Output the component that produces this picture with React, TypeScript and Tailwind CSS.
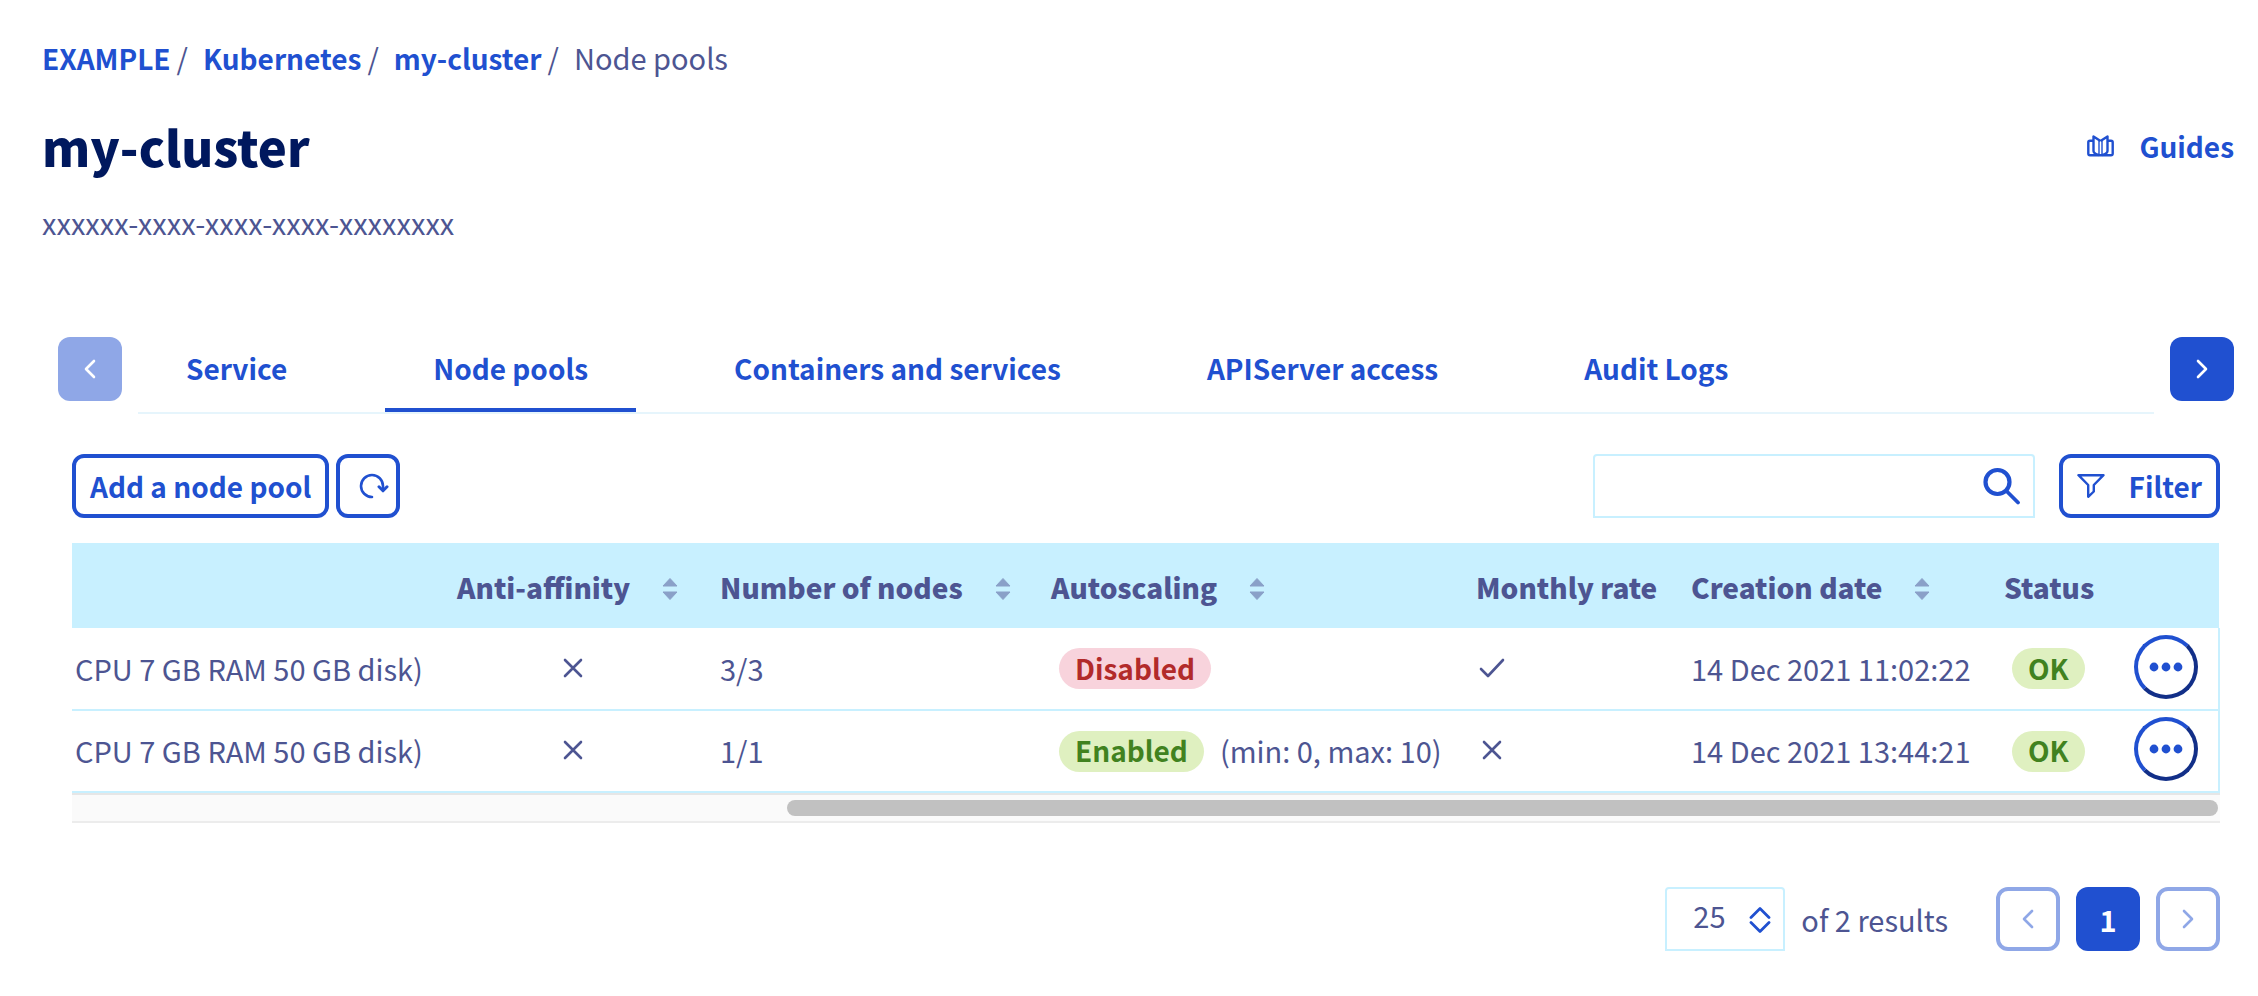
import React from "react";

type IconProps = { className?: string };

const ChevronLeft = ({ className }: IconProps) => (
  <svg viewBox="0 0 12 20" className={className} fill="none" stroke="currentColor" strokeWidth="2.6" strokeLinecap="round" strokeLinejoin="round" aria-hidden="true">
    <path d="M10 2 2 10l8 8" />
  </svg>
);

const ChevronRight = ({ className }: IconProps) => (
  <svg viewBox="0 0 12 20" className={className} fill="none" stroke="currentColor" strokeWidth="2.6" strokeLinecap="round" strokeLinejoin="round" aria-hidden="true">
    <path d="m2 2 8 8-8 8" />
  </svg>
);

const Book = () => (
  <svg viewBox="0 0 28 24" className="h-6 w-7" fill="none" stroke="currentColor" strokeWidth="2.4" strokeLinejoin="round" aria-hidden="true">
    <path d="M6.5 6.700H3Q1.300 6.700 1.300 8.200V19.500Q1.300 21.200 3 21.200H24Q25.700 21.200 25.700 19.500V8.200Q25.700 6.700 24 6.700H20.500" />
    <path d="M13.500 7 6.500 2.500V17Q6.500 19.500 11.700 21M13.500 7 20.500 2.500V17Q20.500 19.500 15.300 21" />
    <path d="M12 6.500V20.500M15 6.500V20.500" strokeWidth="1.400" />
  </svg>
);

const Refresh = () => (
  <svg viewBox="0 0 30 26" className="h-[26px] w-[30px]" fill="none" stroke="currentColor" strokeWidth="2.600" strokeLinecap="round" strokeLinejoin="round" aria-hidden="true">
    <path d="M13 24A11 11 0 1 1 24 13V17.500" />
    <path d="m20 13.800 4 4 4-4" strokeWidth="3" />
  </svg>
);

const Search = () => (
  <svg viewBox="0 0 38 38" className="h-[38px] w-[38px]" fill="none" stroke="currentColor" strokeWidth="4.200" strokeLinecap="round" aria-hidden="true">
    <circle cx="14.500" cy="15" r="12" />
    <path d="m24 24.500 11 11" strokeWidth="3.800" />
  </svg>
);

const Funnel = () => (
  <svg viewBox="0 0 28 26" className="h-[26px] w-7" fill="none" stroke="currentColor" strokeWidth="2.400" strokeLinejoin="round" aria-hidden="true">
    <path d="M1.500 2.200H26.500L16.800 12V18.500L11.200 23.800V12Z" />
  </svg>
);

const Cross = ({ label }: { label: string }) => (
  <svg viewBox="0 0 20 20" className="h-5 w-5" fill="none" stroke="currentColor" strokeWidth="2.600" strokeLinecap="round" role="img" aria-label={label}>
    <path d="m2 2 16 16M18 2 2 18" />
  </svg>
);

const Check = ({ label }: { label: string }) => (
  <svg viewBox="0 0 26 20" className="h-5 w-[26px]" fill="none" stroke="currentColor" strokeWidth="2.600" strokeLinecap="round" strokeLinejoin="round" role="img" aria-label={label}>
    <path d="m2 11 7 7L24 2" />
  </svg>
);

const Sort = () => (
  <svg viewBox="0 0 16 24" className="mt-1 h-6 w-4 text-[#8aa0c8]" fill="currentColor" stroke="currentColor" strokeWidth="1" strokeLinejoin="round" aria-hidden="true">
    <path d="M8 1.500 15 9H1Z" />
    <path d="M8 22.500 15 15H1Z" />
  </svg>
);

const UpDown = ({ className }: IconProps) => (
  <svg viewBox="0 0 22 26" className={className} fill="none" stroke="currentColor" strokeWidth="2.800" strokeLinecap="round" strokeLinejoin="round" aria-hidden="true">
    <path d="m2 10.500 9-9 9 9M2 15.500l9 9 9-9" />
  </svg>
);

const Dots = () => (
  <svg viewBox="0 0 34 10" className="h-[10px] w-[34px]" fill="currentColor" aria-hidden="true">
    <circle cx="5" cy="5" r="4.400" />
    <circle cx="17" cy="5" r="4.400" />
    <circle cx="29" cy="5" r="4.400" />
  </svg>
);

const columns = [
  { label: "", sortable: false, width: "w-[369px]" },
  { label: "Anti-affinity", sortable: true, width: "w-[263px]" },
  { label: "Number of nodes", sortable: true, width: "w-[331px]" },
  { label: "Autoscaling", sortable: true, width: "" },
  { label: "Monthly rate", sortable: false, width: "w-[215px]" },
  { label: "Creation date", sortable: true, width: "w-[313px]" },
  { label: "Status", sortable: false, width: "w-[124px]" },
  { label: "", sortable: false, width: "w-[107px]" },
];

const rows = [
  { flavor: "CPU 7 GB RAM 50 GB disk)", nodes: "3/3", autoscaling: false, range: "", monthly: true, created: "14 Dec 2021 11:02:22", status: "OK" },
  { flavor: "CPU 7 GB RAM 50 GB disk)", nodes: "1/1", autoscaling: true, range: "(min: 0, max: 10)", monthly: false, created: "14 Dec 2021 13:44:21", status: "OK" },
];

const parents = ["EXAMPLE", "Kubernetes", "my-cluster"];
const tabs = ["Service", "Node pools", "Containers and services", "APIServer access", "Audit Logs"];

const outlined = "flex h-16 items-center rounded-xl border-4 border-[#2050d0] text-[28px] font-bold text-[#2050d0]";
const greenPill = "inline-flex h-[41px] items-center rounded-full bg-[#dff0c0] px-4 pb-0.5 text-[28px] font-bold text-[#41821f]";
const redPill = "inline-flex h-[41px] items-center rounded-full bg-[#f8d3dc] px-4 pb-0.5 text-[28px] font-bold text-[#b22a2a]";

export default function App() {
  return (
    <main className="pt-[37px] pr-6 pl-[42px] font-['Noto_Sans_CJK_SC','Noto_Sans_CJK_JP',sans-serif] text-[29px] leading-10 text-[#4d5592]">
      <nav aria-label="Breadcrumb">
        <ol className="flex items-baseline">
          {parents.map((p) => (
            <li key={p} className="mr-[15px] flex items-baseline gap-1.5">
              <a href="#" className="text-[28px] font-bold text-[#2050d0]">{p}</a>
              <span>/</span>
            </li>
          ))}
          <li>Node pools</li>
        </ol>
      </nav>

      <header className="mt-9 flex items-center justify-between">
        <h1 className="text-[49px] leading-[64px] font-black text-[#00185e]">my-cluster</h1>
        <button className="flex items-center gap-6 text-[28px] font-bold text-[#2050d0]">
          <Book />
          Guides
        </button>
      </header>
      <p className="mt-6">xxxxxx-xxxx-xxxx-xxxx-xxxxxxxx</p>

      <section className="mt-[95px] ml-4 flex items-start gap-4">
        <button disabled aria-label="Previous tabs" className="flex size-16 items-center justify-center rounded-xl bg-[#8fa7e7] text-white">
          <ChevronLeft className="h-5 w-3" />
        </button>
        <div role="tablist" className="flex flex-1 gap-[50px] border-b-2 border-[#e6f5fc]">
          {tabs.map((t) => (
            <button
              key={t}
              role="tab"
              aria-selected={t === "Node pools"}
              className={
                t === "Node pools"
                  ? "h-[75px] border-b-4 border-[#2050d0] px-12 pb-2.5 text-[28px] font-bold text-[#2050d0]"
                  : "h-[75px] border-b-4 border-transparent px-12 pb-2.5 text-[28px] font-bold text-[#2050d0]"
              }
            >
              {t}
            </button>
          ))}
        </div>
        <button aria-label="Next tabs" className="flex size-16 items-center justify-center rounded-xl bg-[#2050d0] text-white">
          <ChevronRight className="h-5 w-3" />
        </button>
      </section>

      <section className="mt-10 mr-[14px] ml-[30px]">
        <div className="flex items-center justify-between">
          <div className="flex gap-[7px]">
            <button className={`${outlined} px-3.5`}>Add a node pool</button>
            <button aria-label="Refresh" className={`${outlined} w-16 justify-end pr-[7px]`}>
              <Refresh />
            </button>
          </div>
          <div className="flex gap-6">
            <div className="flex h-16 w-[442px] items-center rounded-t border-2 border-[#c8f0ff] pr-3">
              <input type="search" aria-label="Search node pools" className="h-full min-w-0 flex-1 px-4 outline-none" />
              <button aria-label="Search" className="text-[#2050d0]">
                <Search />
              </button>
            </div>
            <button className={`${outlined} gap-6 px-[14px]`}>
              <Funnel />
              Filter
            </button>
          </div>
        </div>

        <div className="mt-[25px] overflow-hidden">
          <table className="w-full table-fixed border-collapse text-left whitespace-nowrap">
            <thead>
              <tr className="h-[85px] bg-[#c8f0ff]">
                {columns.map((c, i) => (
                  <th key={i} scope="col" className={`${c.width} px-4 pt-0.5 pb-0 text-[28px] font-black`}>
                    {c.sortable ? (
                      <button className="flex items-center gap-8 font-black">
                        {c.label}
                        <Sort />
                      </button>
                    ) : (
                      c.label
                    )}
                  </th>
                ))}
              </tr>
            </thead>
            <tbody className="border-r-2 border-[#c8f0ff]">
              {rows.map((r) => (
                <tr key={r.created} className="h-[82px] border-b-2 border-[#c8f0ff]">
                  <td className="pt-0 pb-0.5 pl-[3px]">{r.flavor}</td>
                  <td className="px-4 pt-0 pb-0.5">
                    <div className="flex justify-center">
                      <Cross label="Disabled" />
                    </div>
                  </td>
                  <td className="px-4 pt-0 pb-0.5">{r.nodes}</td>
                  <td className="py-0 pl-6">
                    <div className="flex items-center gap-4">
                      <span className={r.autoscaling ? greenPill : redPill}>{r.autoscaling ? "Enabled" : "Disabled"}</span>
                      {r.range && <span className="pb-0.5">{r.range}</span>}
                    </div>
                  </td>
                  <td className="px-4 pt-0 pb-0.5">
                    <div className="flex w-8 justify-center">{r.monthly ? <Check label="Yes" /> : <Cross label="No" />}</div>
                  </td>
                  <td className="px-4 pt-0 pb-0.5">{r.created}</td>
                  <td className="py-0 pl-6">
                    <div className="flex">
                      <span className={greenPill}>{r.status}</span>
                    </div>
                  </td>
                  <td className="pt-0 pr-5 pb-1">
                    <div className="flex justify-end">
                      <button
                        aria-label="Actions"
                        className="flex size-16 items-center justify-center rounded-full border-4 border-t-[#2050d0] border-r-[#122f88] border-b-[#122f88] border-l-[#2050d0] text-[#2050d0]"
                      >
                        <Dots />
                      </button>
                    </div>
                  </td>
                </tr>
              ))}
            </tbody>
          </table>
          <div className="flex h-[30px] items-center justify-end border-y-2 border-t-[#e6e6e6] border-b-[#ececec] bg-[#fafafa] pr-[2px]">
            <div className="h-4 w-2/3 rounded-full bg-[#c1c1c1]" />
          </div>
        </div>

        <div className="mt-16 flex items-center justify-end">
          <div className="relative">
            <select aria-label="Results per page" className="h-16 w-[120px] appearance-none rounded-t border-2 border-[#c8f0ff] pb-2 pl-[26px] outline-none">
              <option>25</option>
              <option>50</option>
            </select>
            <UpDown className="pointer-events-none absolute top-5 right-3.5 h-[26px] w-[22px] text-[#2050d0]" />
          </div>
          <span className="ml-4">of 2 results</span>
          <div className="ml-12 flex gap-4">
            <button disabled aria-label="Previous page" className="flex size-16 items-center justify-center rounded-xl border-4 border-[#8fa7e7] text-[#8fa7e7]">
              <ChevronLeft className="h-5 w-3" />
            </button>
            <button aria-current="page" className="flex size-16 items-center justify-center rounded-xl bg-[#2050d0] font-bold text-white">1</button>
            <button disabled aria-label="Next page" className="flex size-16 items-center justify-center rounded-xl border-4 border-[#8fa7e7] text-[#8fa7e7]">
              <ChevronRight className="h-5 w-3" />
            </button>
          </div>
        </div>
      </section>
    </main>
  );
}
